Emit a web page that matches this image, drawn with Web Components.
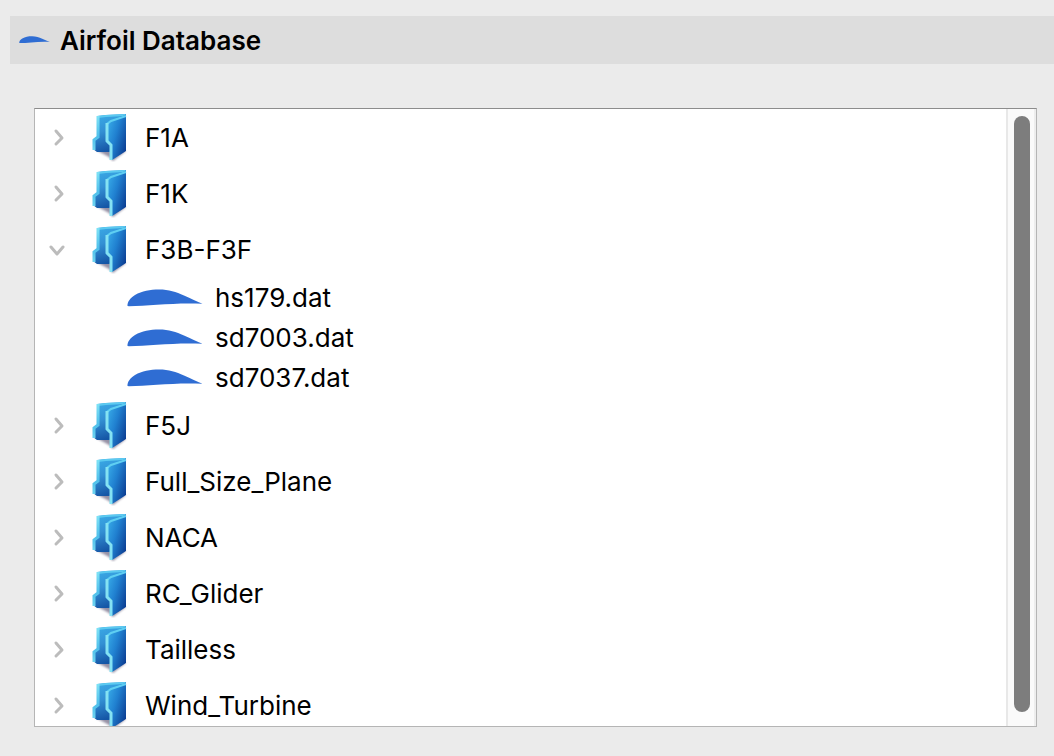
<!DOCTYPE html>
<html lang="en">
<head>
<meta charset="utf-8">
<title>Airfoil Database</title>
<style>
html, body { height: 100%; margin: 0; }
body { background: #ebebeb; color: #000; font-family: Inter, "Liberation Sans", sans-serif; font-size: 26px; line-height: 32px; }
</style>
</head>
<body>
<airfoil-database>
  <panel-title slot="title">Airfoil Database</panel-title>
  <folder-item label="F1A"></folder-item>
  <folder-item label="F1K"></folder-item>
  <folder-item label="F3B-F3F" open>
    <file-item>hs179.dat</file-item>
    <file-item>sd7003.dat</file-item>
    <file-item>sd7037.dat</file-item>
  </folder-item>
  <folder-item label="F5J"></folder-item>
  <folder-item label="Full_Size_Plane"></folder-item>
  <folder-item label="NACA"></folder-item>
  <folder-item label="RC_Glider"></folder-item>
  <folder-item label="Tailless"></folder-item>
  <folder-item label="Wind_Turbine"></folder-item>
</airfoil-database>
<script>
class ShadowElement extends HTMLElement {
  constructor() {
    super();
    this.attachShadow({ mode: "open" }).innerHTML = this.constructor.markup;
  }
}

customElements.define("airfoil-icon", class extends ShadowElement {
  static markup = `
    <style>
      :host { display: block; flex: none; }
      svg { display: block; width: 100%; height: auto; }
    </style>
    <svg viewBox="0 0 76 18" aria-hidden="true">
      <path d="M.5 17C.3 13 3 9 8 6C15 2 23 .5 32 .5C42 .5 49 3 57 6.500C64 9.500 70 12.500 75.500 14.700C60 14 45 14.600 30 15.800C20 16.500 10 17.300 2 17.300Z" fill="#2f6dd3"/>
    </svg>`;
});

customElements.define("folder-icon", class extends ShadowElement {
  static markup = `
    <style>
      :host { display: block; flex: none; width: 36px; height: 48px; }
      svg { display: block; width: 100%; height: 100%; }
    </style>
    <svg viewBox="0 0 36 48" aria-hidden="true">
      <defs>
        <linearGradient id="back" x1="0" y1="0" x2=".3" y2="1">
          <stop offset="0" stop-color="#3aaee9"/><stop offset=".5" stop-color="#3390d4"/><stop offset="1" stop-color="#1556a6"/>
        </linearGradient>
        <linearGradient id="front" x1="0" y1=".1" x2="1" y2=".75">
          <stop offset="0" stop-color="#3cb2ec"/><stop offset=".5" stop-color="#2080d0"/><stop offset="1" stop-color="#0c3f94"/>
        </linearGradient>
        <linearGradient id="edge" x1="0" y1="0" x2="0" y2="1">
          <stop offset="0" stop-color="#7fe2f5"/><stop offset=".6" stop-color="#4fbfea"/><stop offset="1" stop-color="#6ed4f0"/>
        </linearGradient>
        <filter id="soft" x="-20%" y="-20%" width="140%" height="140%"><feGaussianBlur stdDeviation="1"/></filter>
      </defs>
      <path d="M4 36L19 34L34 37L21 47L17 43Z" fill="#6a6480" opacity=".7" filter="url(#soft)"/>
      <path d="M5 2L13 1L34 0L30 34L17 38H5L1 35V26L5 23Z" fill="url(#back)"/>
      <path d="M6 3L14 2L33 1" fill="none" stroke="#5ccaf0" stroke-width="2"/>
      <path d="M6 2V23L2 26V36" fill="none" stroke="url(#edge)" stroke-width="3"/>
      <path d="M14 9L18 6L34 1V37L20 46H18V31L14 28Z" fill="url(#front)"/>
      <path d="M15 10L19 7L34 2" fill="none" stroke="#5fcff2" stroke-width="2"/>
      <path d="M15 9V27L19 31V46" fill="none" stroke="#84e2f3" stroke-width="3"/>
    </svg>`;
});

customElements.define("panel-title", class extends ShadowElement {
  static markup = `
    <style>
      :host { display: block; }
      header { display: flex; align-items: center; gap: 10px; height: 48px; padding-left: 9px; background: #ddd; }
      airfoil-icon { width: 31px; }
      h1 { margin: 0; padding-top: 2px; font-size: 26px; line-height: 32px; font-weight: 600; }
    </style>
    <header><airfoil-icon></airfoil-icon><h1><slot></slot></h1></header>`;
});

customElements.define("file-item", class extends ShadowElement {
  static markup = `
    <style>
      :host { display: flex; align-items: center; gap: 12px; height: 40px; padding-left: 92px; }
      airfoil-icon { width: 76px; }
    </style>
    <airfoil-icon></airfoil-icon><span><slot></slot></span>`;
  connectedCallback() { this.setAttribute("role", "treeitem"); }
});

customElements.define("folder-item", class extends ShadowElement {
  static markup = `
    <style>
      :host { display: block; }
      .row { display: flex; align-items: center; height: 56px; padding-left: 10px; }
      button { flex: none; width: 24px; height: 24px; margin-right: 23px; padding: 0; border: 0; background: none; }
      button svg { display: block; }
      .down, :host([open]) .right { display: none; }
      :host([open]) .down { display: block; }
      .label { margin-left: 17px; }
      .files { display: none; }
      :host([open]) .files { display: block; }
      path { fill: none; stroke: #bcbcbc; stroke-width: 3; stroke-linecap: round; stroke-linejoin: round; }
    </style>
    <div class="row">
      <button type="button">
        <svg class="right" width="24" height="24" viewBox="0 0 24 24" aria-hidden="true"><path d="M11 5L17 12L11 18"/></svg>
        <svg class="down" width="24" height="24" viewBox="0 0 24 24" aria-hidden="true"><path d="M6 9L12 16L18 9"/></svg>
      </button>
      <folder-icon></folder-icon>
      <span class="label"></span>
    </div>
    <div class="files" role="group"><slot></slot></div>`;
  connectedCallback() {
    const label = this.getAttribute("label");
    const button = this.shadowRoot.querySelector("button");
    this.setAttribute("role", "treeitem");
    this.shadowRoot.querySelector(".label").textContent = label;
    button.setAttribute("aria-label", label);
    const sync = () => button.setAttribute("aria-expanded", this.hasAttribute("open"));
    button.onclick = () => { this.toggleAttribute("open"); sync(); };
    sync();
  }
});

customElements.define("scroll-track", class extends ShadowElement {
  static markup = `
    <style>
      :host { display: flex; flex: none; box-sizing: border-box; width: 30px; padding: 7px 4px 14px 6px; background: #fafafa; border-left: 2px solid #e8e8e8; border-right: 2px solid #ededed; }
      div { flex: 1; border-radius: 8px; background: #7d7d7d; }
    </style>
    <div></div>`;
});

customElements.define("airfoil-database", class extends ShadowElement {
  static markup = `
    <style>
      :host { display: flex; flex-direction: column; box-sizing: border-box; height: 100%; padding: 16px 0 29px 10px; }
      .frame { display: flex; flex: 1; min-height: 0; box-sizing: border-box; margin: 44px 17px 0 24px; border: 1px solid #b5b5b5; border-top-color: #8c8c8c; background: #fff; }
      .tree { flex: 1; min-width: 0; overflow: hidden; padding-top: 1px; }
    </style>
    <slot name="title"></slot>
    <div class="frame">
      <div class="tree" role="tree"><slot></slot></div>
      <scroll-track></scroll-track>
    </div>`;
});
</script>
</body>
</html>
